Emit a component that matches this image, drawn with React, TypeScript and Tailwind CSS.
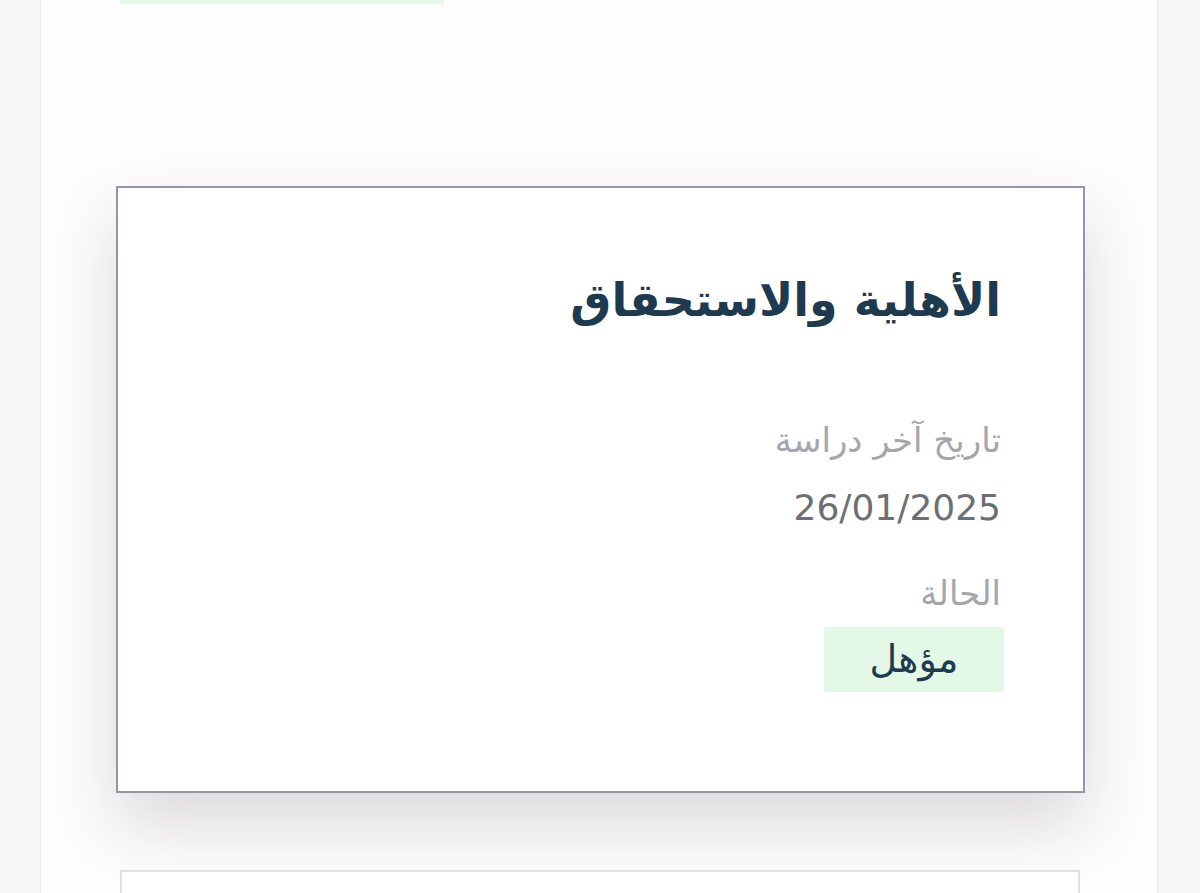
import React from 'react';

const Field = ({ label, children }: { label: string; children: React.ReactNode }) => (
  <div className="flex flex-col items-start">
    <p className="text-[34px] leading-[48px] text-[#a3a7ad]">{label}</p>
    {children}
  </div>
);

export default function App() {
  return (
    <div className="h-[893px] overflow-hidden bg-[#f6f6f7]" style={{ fontFamily: '"DejaVu Sans", "Noto Sans", sans-serif' }}>
      <div className="ml-[40px] w-[1118px] h-full bg-[#fefdfd] border-x border-[#ebebeb] pl-[75px] pr-[72px]">
        {/* tail of the previous card */}
        <div className="h-[4px] w-[324px] ml-[4px] bg-[#e6f8ea]" />

        {/* Eligibility card */}
        <div
          dir="rtl"
          className="mt-[182px] h-[607px] bg-white border-2 border-[#8f98a7] pr-[82px] pt-[82px] shadow-[0_32px_64px_rgba(40,30,40,0.16)]"
        >
          <h2 className="text-[46px] leading-[60px] font-bold text-[#1e3a4f]">الأهلية والاستحقاق</h2>

          <div className="mt-[86px] flex flex-col">
            <Field label="تاريخ آخر دراسة">
              <p className="mt-[20px] text-[36px] leading-[48px] text-[#6c6f74]">26/01/2025</p>
            </Field>
            <div className="mt-[37px]">
              <Field label="الحالة">
                <span className="mt-[10px] -mr-[3px] inline-flex items-center justify-center w-[180px] h-[65px] bg-[#e3f8e6] text-[38px] text-[#1e3a4f]">
                  مؤهل
                </span>
              </Field>
            </div>
          </div>
        </div>

        {/* next card */}
        <div className="mt-[77px] ml-[4px] mr-[5px] h-[120px] bg-white border-2 border-[#e2e2e4]" />
      </div>
    </div>
  );
}
